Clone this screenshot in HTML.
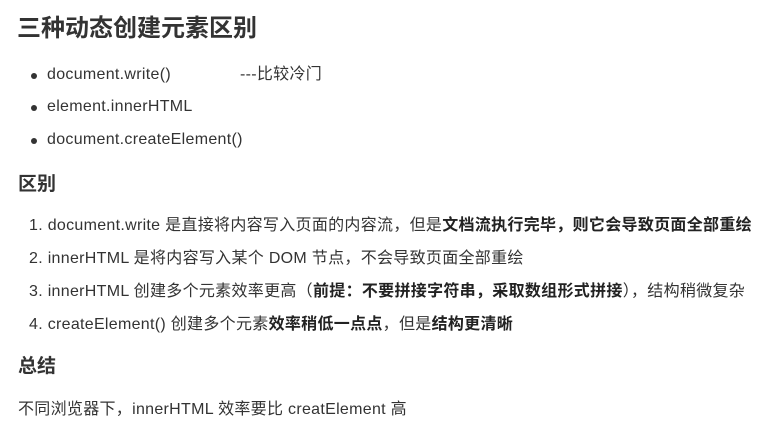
<!DOCTYPE html>
<html><head><meta charset="utf-8"><style>
body{margin:0;width:775px;height:429px;background:#fff;color:#333;font-family:"Liberation Sans","Noto Sans CJK SC",sans-serif;font-size:16px;letter-spacing:0.3px;position:relative;overflow:hidden}
.l{position:absolute;white-space:nowrap;line-height:20px}
h1,h2{margin:0;position:absolute;white-space:nowrap;font-weight:bold;letter-spacing:0}
h1{font-size:24px;left:17px;top:13px;line-height:32px}
h2{font-size:19px;left:18px;line-height:24px}
.dot{position:absolute;width:6px;height:6px;border-radius:50%;background:#333}
b{font-weight:bold;color:#222}
</style></head><body>
<h1>三种动态创建元素区别</h1>
<div class="dot" style="left:31px;top:73px"></div><div class="l" style="left:47px;top:65px">document.write()</div><div class="l" style="left:240px;top:65px">---比较冷门</div>
<div class="dot" style="left:31px;top:105px"></div><div class="l" style="left:47px;top:97px">element.innerHTML</div>
<div class="dot" style="left:31px;top:138px"></div><div class="l" style="left:47px;top:130px">document.createElement()</div>
<h2 style="top:173px">区别</h2>
<div class="l" style="left:29px;top:216px">1. document.write 是直接将内容写入页面的内容流，但是<b>文档流执行完毕，则它会导致页面全部重绘</b></div>
<div class="l" style="left:29px;top:249px">2. innerHTML 是将内容写入某个 DOM 节点，不会导致页面全部重绘</div>
<div class="l" style="left:29px;top:282px">3. innerHTML 创建多个元素效率更高（<b>前提：不要拼接字符串，采取数组形式拼接</b>），结构稍微复杂</div>
<div class="l" style="left:29px;top:315px">4. createElement() 创建多个元素<b>效率稍低一点点</b>，但是<b>结构更清晰</b></div>
<h2 style="top:355px">总结</h2>
<div class="l" style="left:18px;top:400px">不同浏览器下，innerHTML 效率要比 creatElement 高</div>
</body></html>
